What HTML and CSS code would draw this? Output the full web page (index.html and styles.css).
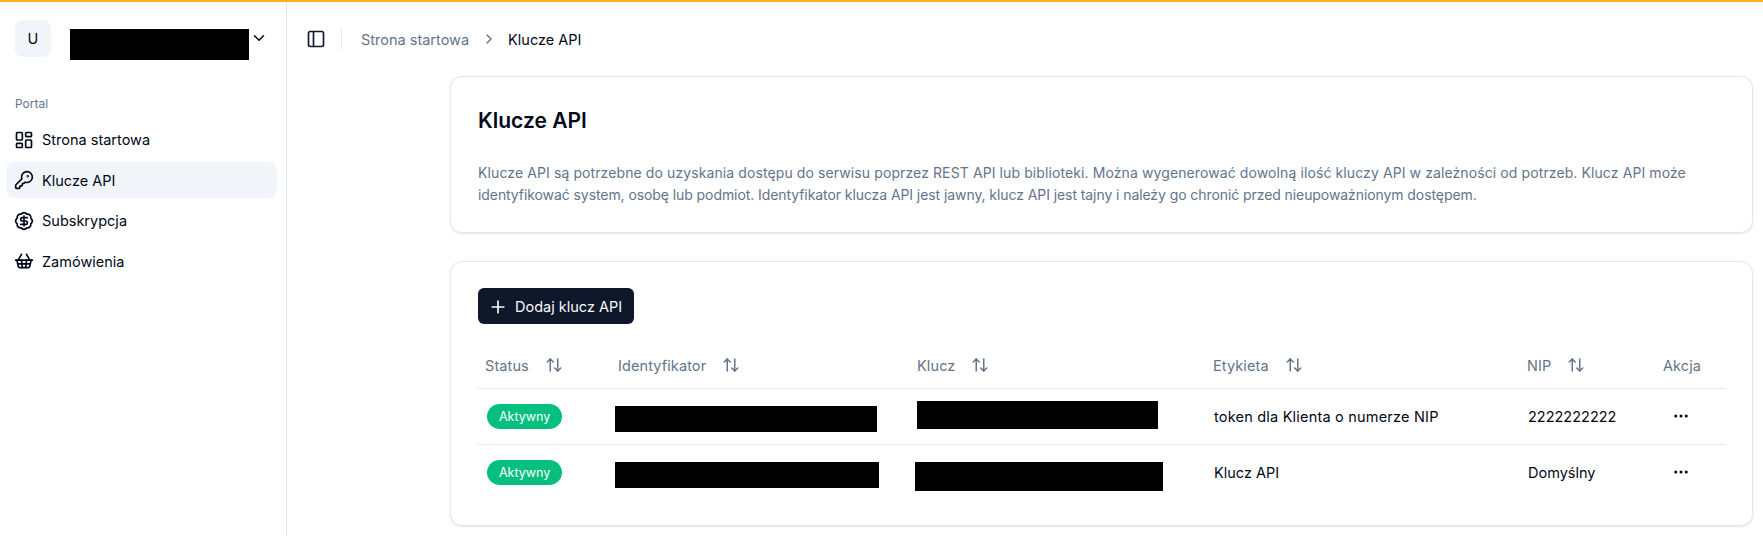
FILE: index.html
```html
<!DOCTYPE html>
<html lang="pl">
<head>
<meta charset="utf-8">
<title>Klucze API</title>
<link rel="stylesheet" href="styles.css">
</head>
<body>
<div class="app">
  <aside class="sidebar">
    <div class="account">
      <div class="avatar">U</div>
      <div class="redact account-name"></div>
      <svg class="icon chevron" viewBox="0 0 24 24"><path d="m6 9 6 6 6-6"/></svg>
    </div>
    <div class="nav-label">Portal</div>
    <nav class="nav">
      <a class="nav-item">
        <svg class="icon" viewBox="0 0 24 24"><rect x="3" y="3" width="7" height="9" rx="1"/><rect x="14" y="3" width="7" height="5" rx="1"/><rect x="14" y="12" width="7" height="9" rx="1"/><rect x="3" y="16" width="7" height="5" rx="1"/></svg>
        <span>Strona startowa</span>
      </a>
      <a class="nav-item active">
        <svg class="icon" viewBox="0 0 24 24"><path d="M2.586 17.414A2 2 0 0 0 2 18.828V21a1 1 0 0 0 1 1h3a1 1 0 0 0 1-1v-1a1 1 0 0 1 1-1h1a1 1 0 0 0 1-1v-1a1 1 0 0 1 1-1h.172a2 2 0 0 0 1.414-.586l.814-.814a6.5 6.5 0 1 0-4-4z"/><circle cx="16.5" cy="7.5" r=".5"/></svg>
        <span>Klucze API</span>
      </a>
      <a class="nav-item">
        <svg class="icon" viewBox="0 0 24 24"><path d="M3.85 8.62a4 4 0 0 1 4.78-4.77 4 4 0 0 1 6.74 0 4 4 0 0 1 4.78 4.78 4 4 0 0 1 0 6.74 4 4 0 0 1-4.77 4.78 4 4 0 0 1-6.75 0 4 4 0 0 1-4.78-4.77 4 4 0 0 1 0-6.76Z"/><path d="M16 8h-6a2 2 0 1 0 0 4h4a2 2 0 1 1 0 4H8"/><path d="M12 18V6"/></svg>
        <span>Subskrypcja</span>
      </a>
      <a class="nav-item">
        <svg class="icon" viewBox="0 0 24 24"><path d="m15 11-1 9"/><path d="m19 11-4-7"/><path d="M2 11h20"/><path d="m3.5 11 1.6 7.4a2 2 0 0 0 2 1.6h9.8a2 2 0 0 0 2-1.6l1.7-7.4"/><path d="M4.5 15.5h15"/><path d="m5 11 4-7"/><path d="m9 11 1 9"/></svg>
        <span>Zamówienia</span>
      </a>
    </nav>
  </aside>
  <div class="main">
    <header class="topbar">
      <svg class="icon toggle" viewBox="0 0 24 24"><rect x="3" y="3" width="18" height="18" rx="2"/><path d="M9 3v18"/></svg>
      <span class="divider"></span>
      <span class="crumb">Strona startowa</span>
      <svg class="icon crumb-sep" viewBox="0 0 24 24"><path d="m9 18 6-6-6-6"/></svg>
      <span class="crumb-current">Klucze API</span>
    </header>
    <div class="content">
      <section class="card intro">
        <h1 class="title">Klucze API</h1>
        <p class="desc"><span class="line-a">Klucze API są potrzebne do uzyskania dostępu do serwisu poprzez REST API lub biblioteki. Można wygenerować dowolną ilość kluczy API w zależności od potrzeb. Klucz API może</span> <span class="line-b">identyfikować system, osobę lub podmiot. Identyfikator klucza API jest jawny, klucz API jest tajny i należy go chronić przed nieupoważnionym dostępem.</span></p>
      </section>
      <section class="card listing">
        <button class="add-btn">
          <svg class="icon" viewBox="0 0 24 24"><path d="M5 12h14"/><path d="M12 5v14"/></svg>
          <span>Dodaj klucz API</span>
        </button>
        <table class="keys">
          <colgroup>
            <col class="c-status"><col class="c-id"><col class="c-key"><col class="c-label"><col class="c-nip"><col class="c-action">
          </colgroup>
          <thead>
            <tr>
              <th><span class="th-in">Status<svg class="icon sort" viewBox="0 0 24 24"><path d="m21 16-4 4-4-4"/><path d="M17 20V4"/><path d="m3 8 4-4 4 4"/><path d="M7 4v16"/></svg></span></th>
              <th><span class="th-in">Identyfikator<svg class="icon sort" viewBox="0 0 24 24"><path d="m21 16-4 4-4-4"/><path d="M17 20V4"/><path d="m3 8 4-4 4 4"/><path d="M7 4v16"/></svg></span></th>
              <th><span class="th-in">Klucz<svg class="icon sort" viewBox="0 0 24 24"><path d="m21 16-4 4-4-4"/><path d="M17 20V4"/><path d="m3 8 4-4 4 4"/><path d="M7 4v16"/></svg></span></th>
              <th><span class="th-in">Etykieta<svg class="icon sort" viewBox="0 0 24 24"><path d="m21 16-4 4-4-4"/><path d="M17 20V4"/><path d="m3 8 4-4 4 4"/><path d="M7 4v16"/></svg></span></th>
              <th><span class="th-in">NIP<svg class="icon sort" viewBox="0 0 24 24"><path d="m21 16-4 4-4-4"/><path d="M17 20V4"/><path d="m3 8 4-4 4 4"/><path d="M7 4v16"/></svg></span></th>
              <th>Akcja</th>
            </tr>
          </thead>
          <tbody>
            <tr>
              <td><span class="badge">Aktywny</span></td>
              <td><div class="redact r-id1"></div></td>
              <td><div class="redact r-key1"></div></td>
              <td class="wide">token dla Klienta o numerze NIP</td>
              <td>2222222222</td>
              <td><svg class="icon dots" viewBox="0 0 24 24"><circle cx="12" cy="12" r="1"/><circle cx="19" cy="12" r="1"/><circle cx="5" cy="12" r="1"/></svg></td>
            </tr>
            <tr>
              <td><span class="badge">Aktywny</span></td>
              <td><div class="redact r-id2"></div></td>
              <td><div class="redact r-key2"></div></td>
              <td>Klucz API</td>
              <td>Domyślny</td>
              <td><svg class="icon dots" viewBox="0 0 24 24"><circle cx="12" cy="12" r="1"/><circle cx="19" cy="12" r="1"/><circle cx="5" cy="12" r="1"/></svg></td>
            </tr>
          </tbody>
        </table>
      </section>
    </div>
  </div>
</div>
</body>
</html>
```
FILE: styles.css
```css
* { box-sizing: border-box; }
html, body { margin: 0; height: 100%; }
body {
  font-family: Inter, "Liberation Sans", sans-serif;
  font-size: 14.5px;
  color: #020817;
  background: #fff;
  overflow: hidden;
}
.app {
  display: flex;
  height: 536px;
  border-top: 2px solid #fbb214;
}
.icon {
  width: 20px;
  height: 20px;
  flex: none;
  fill: none;
  stroke: currentColor;
  stroke-width: 2;
  stroke-linecap: round;
  stroke-linejoin: round;
}
.redact { background: #000; }

.sidebar {
  width: 287px;
  flex: none;
  border-right: 1px solid #e2e8f0;
  padding: 18px 9px 0 6px;
}
.account {
  display: flex;
  align-items: flex-start;
  padding-left: 9px;
}
.avatar {
  width: 36px;
  height: 37px;
  border-radius: 8px;
  background: #f1f5f9;
  display: flex;
  align-items: center;
  justify-content: center;
}
.account-name {
  width: 179px;
  height: 31px;
  margin: 9px 0 0 19px;
}
.chevron {
  width: 18px;
  height: 18px;
  margin: 9px 0 0 1px;
}
.nav-label {
  margin: 36px 0 0 9px;
  font-size: 12px;
  line-height: 16px;
  color: #64748b;
}
.nav {
  display: flex;
  flex-direction: column;
  gap: 4.5px;
  margin-top: 9.5px;
}
.nav-item {
  display: flex;
  align-items: center;
  gap: 8px;
  height: 36px;
  padding-left: 8px;
  border-radius: 8px;
}
.nav-item.active { background: #f1f5f9; }

.main { flex: 1; min-width: 0; }
.topbar {
  display: flex;
  align-items: center;
  height: 62px;
  padding: 12px 0 0 19px;
}
.toggle { color: #0f172a; }
.divider {
  width: 1px;
  height: 20px;
  background: #e2e8f0;
  margin: 0 19px 0 15px;
}
.crumb { color: #64748b; }
.crumb-sep {
  width: 16px;
  height: 16px;
  margin: 0 11px 0 12px;
  color: #64748b;
}
.crumb-current { color: #020817; }

.content {
  padding: 12px 10px 0 163px;
  display: flex;
  flex-direction: column;
  gap: 28px;
}
.card {
  border: 1px solid #e2e8f0;
  border-radius: 12px;
  background: #fff;
  box-shadow: 0 1px 2px rgba(15, 23, 42, .1);
}
.intro { height: 157px; padding: 30px 27px 0; }
.title {
  margin: 0;
  font-size: 21px;
  font-weight: 600;
  line-height: 28px;
}
.desc {
  margin: 27px 0 0;
  font-size: 14px;
  color: #64748b;
  line-height: 22px;
}
.line-a { display: block; letter-spacing: .1px; white-space: nowrap; }
.line-b { display: block; letter-spacing: -.08px; white-space: nowrap; }
.listing { height: 265px; padding: 26px 27px 0; }
.add-btn {
  display: inline-flex;
  align-items: center;
  gap: 7px;
  height: 36px;
  padding: 1px 12px 0 10px;
  border: 0;
  border-radius: 6px;
  background: #0f172a;
  color: #f8fafc;
  font: 400 14.5px Inter, "Liberation Sans", sans-serif;
}
.keys {
  width: 1247px;
  table-layout: fixed;
  border-collapse: collapse;
  margin-top: 21px;
}
.c-status { width: 133px; }
.c-id { width: 299px; }
.c-key { width: 296px; }
.c-label { width: 314px; }
.c-nip { width: 136px; }
.c-action { width: 69px; }
.keys th {
  height: 43px;
  padding: 0 0 2px 7px;
  font-weight: 400;
  text-align: left;
  color: #64748b;
  letter-spacing: .1px;
}
.th-in { display: inline-flex; align-items: center; gap: 16px; }
.sort { width: 18px; height: 18px; color: #64748b; }
.keys tr { border-bottom: 1px solid #e2e8f0; }
.keys tbody tr:last-child { border-bottom: 0; }
.keys td {
  height: 56px;
  padding: 0 0 0 8px;
  vertical-align: middle;
}
.keys .wide { letter-spacing: .2px; }
.badge {
  display: inline-flex;
  align-items: center;
  height: 25px;
  padding: 0 12px;
  margin-left: 1px;
  border-radius: 13px;
  background: #05bf7f;
  color: #fff;
  font-size: 12.5px;
}
.r-id1 { width: 262px; height: 26px; margin: 5px 0 0 -4px; }
.r-key1 { width: 241px; height: 28px; margin: -3px 0 0 -1px; }
.r-id2 { width: 264px; height: 26px; margin: 5px 0 0 -4px; }
.r-key2 { width: 248px; height: 29px; margin: 9px 0 0 -3px; }
.dots { display: block; width: 18px; height: 18px; margin-left: 8px; }
```
